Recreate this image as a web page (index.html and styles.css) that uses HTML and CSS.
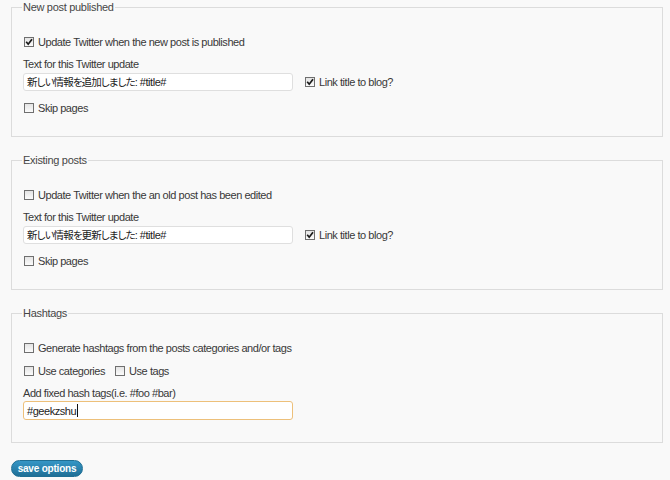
FILE: index.html
```html
<!DOCTYPE html>
<html lang="en">
<head>
<meta charset="utf-8">
<title>Twitter options</title>
<link rel="stylesheet" href="styles.css">
</head>
<body>
<form class="page">
  <fieldset class="box">
    <legend>New post published</legend>
    <div class="check first"><span class="cb on"><svg viewBox="0 0 8 8"><path d="M1.2 3.8 L3.2 6.2 L7 1.2"/></svg></span>Update Twitter when the new post is published</div>
    <div class="caption">Text for this Twitter update</div>
    <div class="input-row">
      <div class="field"><span class="ja">新しい情報を追加しました</span>: #title#</div>
      <div class="check"><span class="cb on"><svg viewBox="0 0 8 8"><path d="M1.2 3.8 L3.2 6.2 L7 1.2"/></svg></span>Link title to blog?</div>
    </div>
    <div class="check skip"><span class="cb"></span>Skip pages</div>
  </fieldset>

  <fieldset class="box">
    <legend>Existing posts</legend>
    <div class="check first"><span class="cb"></span>Update Twitter when the an old post has been edited</div>
    <div class="caption">Text for this Twitter update</div>
    <div class="input-row">
      <div class="field"><span class="ja">新しい情報を更新しました</span>: #title#</div>
      <div class="check"><span class="cb on"><svg viewBox="0 0 8 8"><path d="M1.2 3.8 L3.2 6.2 L7 1.2"/></svg></span>Link title to blog?</div>
    </div>
    <div class="check skip"><span class="cb"></span>Skip pages</div>
  </fieldset>

  <fieldset class="box box-tags">
    <legend>Hashtags</legend>
    <div class="check first"><span class="cb"></span>Generate hashtags from the posts categories and/or tags</div>
    <div class="pair">
      <div class="check"><span class="cb"></span>Use categories</div>
      <div class="check"><span class="cb"></span>Use tags</div>
    </div>
    <div class="caption">Add fixed hash tags(i.e. #foo #bar)</div>
    <div class="field focus">#geekzshu<span class="caret"></span></div>
  </fieldset>

  <button type="button" class="save">save options</button>
</form>
</body>
</html>
```
FILE: styles.css
```css
html, body {
  margin: 0;
  padding: 0;
  background: #f9f9f9;
}

body {
  font-family: "Liberation Sans", Arial, sans-serif;
  font-size: 11px;
  letter-spacing: -0.45px;
  color: #383838;
}

.page {
  padding: 0 7px 0 11px;
  margin: 0;
}

.box {
  margin: 0 0 16px 0;
  padding: 0 11px 20px 11px;
  border: 1px solid #dcdcdc;
  min-width: 0;
}

.box-tags {
  padding-bottom: 22px;
  margin-bottom: 17px;
}

.box legend {
  padding: 0 1px;
  margin-left: -1px;
  line-height: 14px;
  font-size: 11px;
  letter-spacing: -0.3px;
  color: #464646;
}

.check {
  display: flex;
  align-items: center;
  height: 16px;
  line-height: 16px;
  white-space: nowrap;
}

.cb {
  box-sizing: border-box;
  width: 10px;
  height: 10px;
  margin: 0 4px 0 1px;
  border: 1px solid #6f6f6f;
  background: linear-gradient(#e4e4e4, #fbfbfb);
  display: flex;
  align-items: center;
  justify-content: center;
  flex: none;
}

.cb svg {
  width: 8px;
  height: 8px;
  display: block;
}

.cb svg path {
  fill: none;
  stroke: #1a1a1a;
  stroke-width: 1.7;
}

.first {
  margin-top: 20px;
}

.caption {
  margin-top: 7px;
  line-height: 14px;
}

.input-row {
  margin-top: 2px;
  display: flex;
  align-items: center;
  gap: 11px;
}

.field {
  box-sizing: border-box;
  width: 270px;
  height: 18px;
  border: 1px solid #dfdfdf;
  border-radius: 3px;
  background: #fff;
  padding: 0 3px;
  line-height: 16px;
  color: #222;
  display: flex;
  align-items: center;
  white-space: pre;
}

.ja {
  font-family: "Noto Sans CJK JP", sans-serif;
  font-size: 10.5px;
  font-feature-settings: "palt";
  letter-spacing: -0.9px;
}

.skip {
  margin-top: 9px;
}

.pair {
  margin-top: 7px;
  display: flex;
  gap: 9px;
}

.field.focus {
  margin-top: 1px;
  height: 19px;
  border-color: #edc07a;
}

.caret {
  display: inline-block;
  width: 1px;
  height: 13px;
  background: #111;
  margin-left: 1px;
}

.save {
  display: block;
  margin: 0;
  width: 72px;
  height: 17px;
  padding: 0;
  border: 1px solid #1f6f94;
  border-radius: 9px;
  background: linear-gradient(#3596c6, #1f6f96);
  color: #fff;
  font-family: "Liberation Sans", Arial, sans-serif;
  font-size: 10px;
  font-weight: bold;
  letter-spacing: -0.2px;
  line-height: 15px;
}
```
